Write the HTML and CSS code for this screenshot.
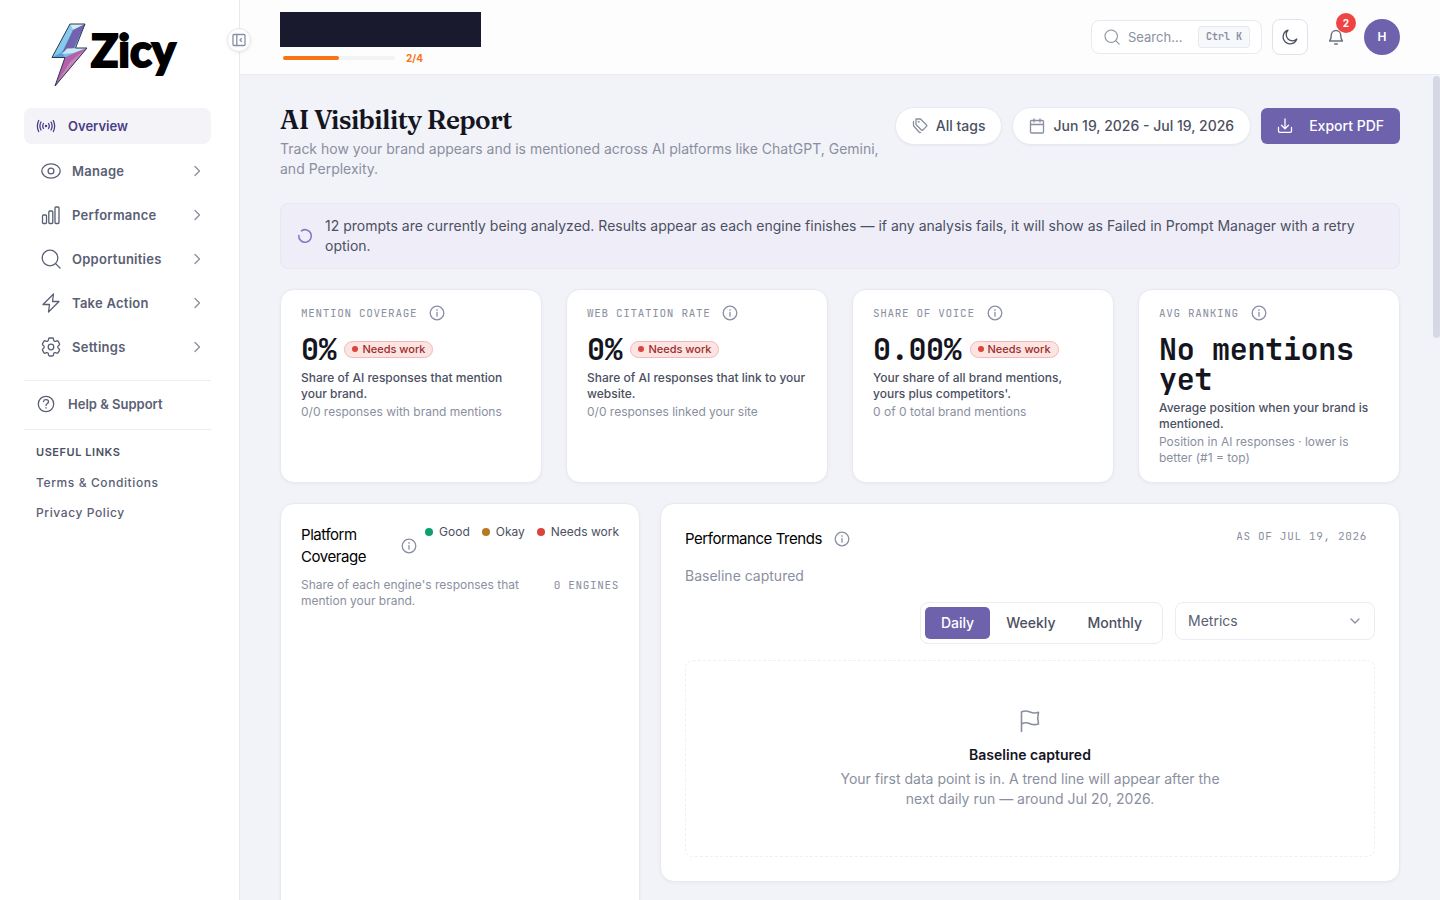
FILE: index.html
```html
<!DOCTYPE html>
<html lang="en">
<head>
    <meta charset="UTF-8">
    <meta name="viewport" content="width=device-width, initial-scale=1.0">
    <title>AI Visibility Report - Zicy</title>
    <link rel="stylesheet" href="styles.css">
</head>
<body>
    <!-- Shared icons -->
    <svg class="sprite" aria-hidden="true">
        <symbol id="chevron" viewBox="0 0 16 16"><path d="M6 3.500 10.500 8 6 12.500"/></symbol>
        <symbol id="info" viewBox="0 0 16 16"><circle cx="8" cy="8" r="6.800"/><path d="M8 7.400v3.800M8 4.700v.6"/></symbol>
        <symbol id="search" viewBox="0 0 20 20"><circle cx="9" cy="9" r="7.800"/><path d="m14.600 14.600 4.400 4.400"/></symbol>
    </svg>

    <div class="app">
        <aside class="sidebar">
            <a class="logo" href="#">
                <svg class="logo-bolt" width="37" height="64" viewBox="0 0 37 64">
                    <path fill="#72bfe8" d="M19 1h15L24.500 25H36L4 63l10-28.500H1z"/>
                    <path fill="#d2edf6" d="m19 1 3 6L34 1z"/>
                    <path fill="#86caec" d="m19 1 3 6-10 20L1 34.500z"/>
                    <path fill="#7263b0" d="M34 1 22 7 11 30l12-5z"/>
                    <path fill="#5a9fd9" d="m1 34.500 10-5 3 5z"/>
                    <path fill="#c8eaf5" d="M16 25.500 36 25l-13 5-12 1z"/>
                    <path fill="#b361a8" d="m14 34.500 9-4.500L36 25 4 63z"/>
                    <path fill="#c884bf" d="M36 25 4 63l15-24z"/>
                    <path fill="none" stroke="#30384f" stroke-width="1" d="M19 1h15L24.500 25H36L4 63l10-28.500H1z"/>
                </svg>
                <span class="logo-text">Zicy</span>
            </a>

            <nav>
                <a class="nav-item active" href="#">
                    <svg class="icon" width="20" height="20" viewBox="0 0 20 20"><circle cx="10" cy="10" r=".6"/><path d="M7.500 7.500q-1.600 2.500 0 5M12.500 7.500q1.600 2.500 0 5M5 6q-2.200 4 0 8M15 6q2.200 4 0 8M2.700 4.500q-2.700 5.500 0 11M17.300 4.500q2.700 5.500 0 11"/></svg>
                    Overview
                </a>
                <a class="nav-item nav-group" href="#">
                    <svg class="icon" width="20" height="20" viewBox="0 0 20 20"><ellipse cx="10" cy="10" rx="9.200" ry="7.200"/><circle cx="10" cy="10" r="2.900"/></svg>
                    Manage
                    <svg class="icon chevron" width="16" height="16"><use href="#chevron"/></svg>
                </a>
                <a class="nav-item nav-group" href="#">
                    <svg class="icon" width="20" height="20" viewBox="0 0 20 20"><rect x="1.500" y="10" width="4" height="8.500" rx="1"/><rect x="7.800" y="6" width="4" height="12.500" rx="1"/><rect x="14" y="2" width="4" height="16.500" rx="1"/></svg>
                    Performance
                    <svg class="icon chevron" width="16" height="16"><use href="#chevron"/></svg>
                </a>
                <a class="nav-item nav-group" href="#">
                    <svg class="icon" width="20" height="20"><use href="#search"/></svg>
                    Opportunities
                    <svg class="icon chevron" width="16" height="16"><use href="#chevron"/></svg>
                </a>
                <a class="nav-item nav-group" href="#">
                    <svg class="icon" width="20" height="20" viewBox="0 0 20 20"><path d="M12.500 1 2 11.500h6.500L7.500 19 18 8.500h-6.500z"/></svg>
                    Take Action
                    <svg class="icon chevron" width="16" height="16"><use href="#chevron"/></svg>
                </a>
                <a class="nav-item nav-group" href="#">
                    <svg class="icon" width="20" height="20" viewBox="2 2 20 20"><path d="M9.594 3.940c.090-.542.560-.940 1.110-.940h2.593c.550 0 1.020.398 1.110.940l.213 1.281c.063.374.313.686.645.870.074.040.147.083.220.127.325.196.720.257 1.075.124l1.217-.456a1.125 1.125 0 0 1 1.370.490l1.296 2.247a1.125 1.125 0 0 1-.260 1.431l-1.003.827c-.293.241-.438.613-.430.992a7.723 7.723 0 0 1 0 .255c-.008.378.137.750.430.991l1.004.827c.424.350.534.955.260 1.430l-1.298 2.247a1.125 1.125 0 0 1-1.369.491l-1.217-.456c-.355-.133-.750-.072-1.076.124a6.470 6.470 0 0 1-.220.128c-.331.183-.581.495-.644.869l-.213 1.281c-.090.543-.560.940-1.110.940h-2.594c-.550 0-1.019-.398-1.110-.940l-.213-1.281c-.062-.374-.312-.686-.644-.870a6.520 6.520 0 0 1-.220-.127c-.325-.196-.720-.257-1.076-.124l-1.217.456a1.125 1.125 0 0 1-1.369-.490l-1.297-2.247a1.125 1.125 0 0 1 .260-1.431l1.004-.827c.292-.240.437-.613.430-.991a6.932 6.932 0 0 1 0-.255c.007-.380-.138-.751-.430-.992l-1.004-.827a1.125 1.125 0 0 1-.260-1.430l1.297-2.247a1.125 1.125 0 0 1 1.370-.491l1.216.456c.356.133.751.072 1.076-.124.072-.044.146-.086.220-.128.332-.183.582-.495.644-.869z"/><circle cx="12" cy="12" r="2.800"/></svg>
                    Settings
                    <svg class="icon chevron" width="16" height="16"><use href="#chevron"/></svg>
                </a>
            </nav>

            <div class="help">
                <a class="nav-item" href="#">
                    <svg class="icon" width="20" height="20" viewBox="0 0 20 20"><circle cx="10" cy="10" r="7.700"/><path d="M7.500 7.500c.5-2.800 5.500-2.400 5 .5-.3 1.500-2.500 1.700-2.500 3.500M10 13.700v.4"/></svg>
                    Help &amp; Support
                </a>
            </div>

            <div class="useful">
                <h2>USEFUL LINKS</h2>
                <a href="#">Terms &amp; Conditions</a>
                <a href="#">Privacy Policy</a>
            </div>

            <button class="collapse-btn" aria-label="Collapse sidebar">
                <svg class="icon" width="14" height="14" viewBox="0 0 14 14"><rect x="1" y="1.500" width="12" height="11" rx="1"/><path d="M4.800 1.500v11M9.500 5.500 8 7l1.500 1.500"/></svg>
            </button>
        </aside>

        <div class="content">
            <header class="topbar">
                <div class="workspace">
                    <div class="workspace-name"></div>
                    <div class="setup">
                        <div class="setup-track"><div class="setup-fill" style="width: 50%"></div></div>
                        <span>2/4</span>
                    </div>
                </div>
                <div class="tools">
                    <label class="search">
                        <svg class="icon" width="16" height="16"><use href="#search"/></svg>
                        <input type="text" placeholder="Search..." aria-label="Search">
                        <kbd>Ctrl K</kbd>
                    </label>
                    <button class="theme-btn" aria-label="Dark mode">
                        <svg class="icon" width="18" height="18" viewBox="0 0 18 18"><path d="M7 2.200A7 7 0 1 0 15.800 11 6 6 0 0 1 7 2.200z"/></svg>
                    </button>
                    <button class="bell-btn" aria-label="Notifications">
                        <svg class="icon" width="18" height="18" viewBox="0 0 16 16"><path d="M2.300 11.500c1.200-1.300 1.500-2.500 1.500-5a4.200 4.200 0 0 1 8.400 0c0 2.500.300 3.700 1.500 5zM6.800 14.300h2.400"/></svg>
                        <span class="bell-count">2</span>
                    </button>
                    <button class="avatar">H</button>
                </div>
            </header>

            <div class="scroll-area">
                <main>
                    <div class="page-head">
                        <div class="page-title">
                            <h1>AI Visibility Report</h1>
                            <p>Track how your brand appears and is mentioned across AI platforms like ChatGPT, Gemini, and Perplexity.</p>
                        </div>
                        <div class="actions">
                            <button class="pill">
                                <svg class="icon" width="16" height="16" viewBox="0 0 16 16"><path d="M4 1h4.500l6 6q.7.7 0 1.400L10.800 12q-.7.700-1.400 0L4 6.500zM1.500 3.500v4.300l5.500 6.200q.7.800 1.700.500"/><circle cx="6.700" cy="3.700" r=".4"/></svg>
                                All tags
                            </button>
                            <button class="pill">
                                <svg class="icon" width="16" height="16" viewBox="0 0 16 16"><rect x="1.500" y="2.500" width="13" height="12.500" rx="1"/><path d="M1.500 6.500h13M5 .8V4M11 .8V4"/></svg>
                                Jun 19, 2026 - Jul 19, 2026
                            </button>
                            <button class="export-btn">
                                <svg class="icon" width="16" height="16" viewBox="0 0 16 16"><path d="M8 1v9.500M4.500 7.200 8 10.700l3.500-3.500M1.500 9.500V13q0 1.300 1.300 1.300h10.400q1.300 0 1.300-1.300V9.500"/></svg>
                                Export PDF
                            </button>
                        </div>
                    </div>

                    <div class="notice">
                        <svg class="icon" width="16" height="16" viewBox="0 0 16 16"><path d="M4.500 2.800A6.300 6.300 0 1 1 1.800 7.500"/></svg>
                        <p>12 prompts are currently being analyzed. Results appear as each engine finishes — if any analysis fails, it will show as Failed in Prompt Manager with a retry option.</p>
                    </div>

                    <section class="stats">
                        <article class="card stat">
                            <div class="stat-label">MENTION COVERAGE <svg class="icon" width="16" height="16"><use href="#info"/></svg></div>
                            <div class="stat-value">0% <span class="badge">Needs work</span></div>
                            <p>Share of AI responses that mention your brand.</p>
                            <small>0/0 responses with brand mentions</small>
                        </article>
                        <article class="card stat">
                            <div class="stat-label">WEB CITATION RATE <svg class="icon" width="16" height="16"><use href="#info"/></svg></div>
                            <div class="stat-value">0% <span class="badge">Needs work</span></div>
                            <p>Share of AI responses that link to your website.</p>
                            <small>0/0 responses linked your site</small>
                        </article>
                        <article class="card stat">
                            <div class="stat-label">SHARE OF VOICE <svg class="icon" width="16" height="16"><use href="#info"/></svg></div>
                            <div class="stat-value">0.00% <span class="badge">Needs work</span></div>
                            <p>Your share of all brand mentions, yours plus competitors'.</p>
                            <small>0 of 0 total brand mentions</small>
                        </article>
                        <article class="card stat">
                            <div class="stat-label">AVG RANKING <svg class="icon" width="16" height="16"><use href="#info"/></svg></div>
                            <div class="stat-value">No mentions yet</div>
                            <p>Average position when your brand is mentioned.</p>
                            <small>Position in AI responses · lower is better (#1 = top)</small>
                        </article>
                    </section>

                    <section class="panels">
                        <article class="card platform">
                            <div class="platform-head">
                                <div class="panel-title">
                                    <h2>Platform Coverage</h2>
                                    <svg class="icon" width="16" height="16"><use href="#info"/></svg>
                                </div>
                                <ul class="legend">
                                    <li class="good">Good</li>
                                    <li class="okay">Okay</li>
                                    <li class="bad">Needs work</li>
                                </ul>
                            </div>
                            <div class="platform-sub">
                                <p>Share of each engine's responses that mention your brand.</p>
                                <span class="mono-label">0 ENGINES</span>
                            </div>
                        </article>

                        <article class="card trends">
                            <div class="trends-head">
                                <div class="panel-title">
                                    <h2>Performance Trends</h2>
                                    <svg class="icon" width="16" height="16"><use href="#info"/></svg>
                                </div>
                                <span class="mono-label">AS OF JUL 19, 2026</span>
                            </div>
                            <p class="trends-sub">Baseline captured</p>
                            <div class="controls">
                                <div class="segmented">
                                    <button class="selected">Daily</button>
                                    <button>Weekly</button>
                                    <button>Monthly</button>
                                </div>
                                <div class="select">
                                    <select aria-label="Metrics"><option>Metrics</option></select>
                                    <svg class="icon" width="16" height="16" viewBox="0 0 16 16"><path d="m4 6 4 4 4-4"/></svg>
                                </div>
                            </div>
                            <div class="empty">
                                <svg class="icon" width="24" height="24" viewBox="0 0 24 24"><path d="M3.500 22.500V3c3-1.800 5.500-1.300 8.500 0s5.500 1.300 8.500.300l-.8 5.700.8 6c-3 1-5.500 1-8.500-.300s-5.500-1.300-8.500.300"/></svg>
                                <h3>Baseline captured</h3>
                                <p>Your first data point is in. A trend line will appear after the next daily run — around Jul 20, 2026.</p>
                            </div>
                        </article>
                    </section>
                </main>
            </div>
            <div class="scroll-thumb"></div>
        </div>
    </div>
</body>
</html>
```
FILE: styles.css
```css
* {
    box-sizing: border-box;
}
body {
    margin: 0;
    font-family: Inter, sans-serif;
    font-size: 14px;
    line-height: 20px;
    color: #4b5062;
    background: #f2f3f8;
}
h1, h2, h3, p, ul {
    margin: 0;
    padding: 0;
}
a {
    color: inherit;
    text-decoration: none;
}
button, input, select {
    font: inherit;
    color: inherit;
}
button {
    cursor: pointer;
}
.sprite {
    display: none;
}
.icon {
    flex: none;
    fill: none;
    stroke: currentColor;
    stroke-width: 1.3;
    stroke-linecap: round;
    stroke-linejoin: round;
}
.app {
    display: flex;
    height: 100vh;
}

/* Sidebar */
.sidebar {
    position: relative;
    z-index: 1;
    flex: none;
    width: 240px;
    padding: 20px 28px 20px 24px;
    background: #fff;
    border-right: 1px solid #e9eaf1;
}
.logo {
    display: flex;
    align-items: center;
    gap: 3px;
    height: 70px;
    padding-left: 27px;
    margin-bottom: 18px;
}
.logo-text {
    padding-bottom: 10px;
    font-family: Lato, sans-serif;
    font-size: 45px;
    font-weight: 900;
    line-height: 60px;
    color: #000;
    -webkit-text-stroke: 2px #000;
}
.nav-item {
    display: flex;
    align-items: center;
    gap: 12px;
    height: 36px;
    padding: 0 12px;
    border-radius: 8px;
    font-size: 13px;
    font-weight: 600;
    color: #5a6074;
}
.nav-item.active {
    margin-bottom: 5px;
    color: #4a3f85;
    background: #f3f3f8;
}
.nav-item.nav-group {
    height: 44px;
    gap: 11px;
    padding: 0 6px 0 17px;
    letter-spacing: 0.02em;
}
.nav-item .chevron {
    margin-left: auto;
    color: #8a8fa0;
}
.help {
    margin-top: 11px;
    padding: 5px 0 7px;
    border-top: 1px solid #ededf0;
    border-bottom: 1px solid #ededf0;
}
.useful {
    padding: 12px;
}
.useful h2 {
    margin-bottom: 6px;
    font-size: 11px;
    font-weight: 600;
    letter-spacing: 0.05em;
}
.useful a {
    display: block;
    font-size: 12px;
    font-weight: 500;
    line-height: 30px;
    letter-spacing: 0.05em;
    color: #5a6074;
}
.collapse-btn {
    position: absolute;
    top: 28px;
    right: -12px;
    display: grid;
    place-items: center;
    width: 24px;
    height: 24px;
    padding: 0;
    border: 1px solid #e6e7f0;
    border-radius: 50%;
    background: #fff;
    color: #8a8fa5;
    box-shadow: 0 1px 3px rgba(80, 80, 120, 0.1);
}

/* Top bar */
.content {
    position: relative;
    flex: 1;
    min-width: 0;
    display: flex;
    flex-direction: column;
}
.topbar {
    display: flex;
    justify-content: space-between;
    align-items: center;
    flex: none;
    height: 75px;
    padding: 0 40px;
    background: #fdfdfd;
    border-bottom: 1px solid #ecedf2;
}
.workspace {
    padding-top: 4px;
}
.workspace-name {
    width: 201px;
    height: 35px;
    background: #1a1a2e;
}
.setup {
    display: flex;
    align-items: center;
    gap: 11px;
    padding: 3px 3px 0;
    font-size: 10px;
    font-weight: 700;
    line-height: 16px;
    color: #f97316;
}
.setup-track {
    width: 112px;
    height: 4px;
    border-radius: 2px;
    background: #f3f3f3;
}
.setup-fill {
    height: 4px;
    border-radius: 2px;
    background: #f97316;
}
.tools {
    display: flex;
    align-items: center;
    gap: 10px;
}
.search {
    display: flex;
    align-items: center;
    gap: 8px;
    width: 171px;
    height: 34px;
    padding: 0 11px 0 12px;
    border: 1px solid #e9eaf1;
    border-radius: 8px;
    background: #fff;
    color: #8a8fa0;
}
.search input {
    flex: 1;
    min-width: 0;
    padding: 0;
    border: none;
    outline: none;
    background: none;
    font-size: 13px;
}
.search input::placeholder {
    color: #8a8fa0;
}
.search kbd {
    padding: 0 7px;
    border: 1px solid #e6e8f0;
    border-radius: 4px;
    background: #f7f8fb;
    font-family: "JetBrains Mono", "Liberation Mono", monospace;
    font-size: 10px;
    font-weight: 600;
    line-height: 20px;
}
.theme-btn {
    display: grid;
    place-items: center;
    width: 36px;
    height: 36px;
    padding: 0;
    border: 1px solid #e0e1ec;
    border-radius: 8px;
    background: #fff;
}
.bell-btn {
    position: relative;
    display: grid;
    place-items: center;
    width: 36px;
    height: 36px;
    padding: 0;
    border: none;
    background: none;
    color: #6a7080;
}
.bell-count {
    position: absolute;
    top: -6px;
    right: -2px;
    width: 20px;
    border-radius: 10px;
    background: #ef4444;
    color: #fff;
    font-size: 10px;
    font-weight: 700;
}
.avatar {
    width: 36px;
    height: 36px;
    padding: 0;
    border: none;
    border-radius: 50%;
    background: #6f62ad;
    color: #fff;
    font-size: 12px;
    font-weight: 600;
}

/* Page */
.scroll-area {
    flex: 1;
    overflow-y: auto;
    scrollbar-width: none;
}
.scroll-thumb {
    position: absolute;
    top: 76px;
    right: 0;
    width: 7px;
    height: 262px;
    border-radius: 4px;
    background: #d6d9e5;
}
main {
    padding: 28px 40px;
}
.page-head {
    display: flex;
    align-items: flex-start;
    justify-content: space-between;
    gap: 14px;
}
.page-title h1 {
    margin-bottom: 2px;
    font-family: Fraunces, "Liberation Serif", serif;
    font-size: 26px;
    font-weight: 600;
    line-height: 34px;
    letter-spacing: -0.02em;
    color: #14151f;
}
.page-title p {
    color: #8a8fa0;
}
.actions {
    display: flex;
    align-items: center;
    flex: none;
    gap: 10px;
    padding-top: 4px;
}
.pill, .export-btn {
    display: flex;
    align-items: center;
    font-weight: 500;
}
.pill {
    gap: 8px;
    height: 38px;
    padding: 0 16px;
    border: 1px solid #e9eaf1;
    border-radius: 19px;
    background: #fff;
    box-shadow: 0 1px 2px rgba(80, 80, 120, 0.06);
}
.pill .icon {
    color: #8a8fa0;
}
.export-btn {
    gap: 16px;
    height: 36px;
    padding: 0 16px;
    border: none;
    border-radius: 6px;
    background: #6f62ad;
    color: #fff;
}
.notice {
    display: flex;
    align-items: center;
    gap: 12px;
    margin: 24px 0 20px;
    padding: 12px 16px;
    border: 1px solid #e9e8f1;
    border-radius: 8px;
    background: #efedf8;
}
.notice .icon {
    stroke-width: 1.6;
    color: #8579c4;
}
.card {
    border: 1px solid #e9eaf1;
    border-radius: 14px;
    background: #fff;
    box-shadow: 0 1px 3px rgba(80, 80, 120, 0.06);
}
.stats {
    display: grid;
    grid-template-columns: repeat(4, 1fr);
    gap: 24px;
    margin-bottom: 20px;
}
.stat {
    padding: 15px 20px 16px;
    font-size: 12px;
    line-height: 16px;
}
.stat-label, .mono-label {
    font-family: "JetBrains Mono", "Liberation Mono", monospace;
    font-size: 11px;
    letter-spacing: 0.06em;
    line-height: 16px;
    color: #8a8fa0;
}
.stat-label {
    display: flex;
    gap: 12px;
}
.stat-value {
    display: flex;
    align-items: center;
    gap: 8px;
    margin: 13px 0 6px;
    font-family: "JetBrains Mono", "Liberation Mono", monospace;
    font-size: 30px;
    font-weight: 700;
    line-height: 30px;
    letter-spacing: -0.01em;
    color: #14151f;
}
.badge {
    display: flex;
    align-items: center;
    gap: 4px;
    padding: 0 7px;
    border: 1px solid #f3b9b6;
    border-radius: 9px;
    background: #fbe4e2;
    color: #9b2c2c;
    font-family: Inter, sans-serif;
    font-size: 11px;
    font-weight: 500;
    line-height: 15px;
    letter-spacing: normal;
}
.badge::before {
    content: "";
    width: 6px;
    height: 6px;
    border-radius: 50%;
    background: #d9453d;
}
.stat p {
    margin-bottom: 2px;
    font-weight: 500;
}
.stat small {
    display: block;
    font-size: 12px;
    color: #8a8fa0;
}
.stat-label .icon, .panel-title .icon {
    color: #8a8fa5;
}

/* Panels */
.panels {
    display: grid;
    grid-template-columns: 360px 1fr;
    align-items: start;
    gap: 20px;
}
.panel-title {
    display: flex;
    align-items: center;
    gap: 12px;
}
.panel-title h2 {
    font-size: 15px;
    font-weight: 400;
    line-height: 22px;
    letter-spacing: -0.03em;
    color: #000;
}
.platform {
    min-height: 560px;
    padding: 20px;
    font-size: 12px;
    line-height: 16px;
}
.platform-head, .platform-sub, .trends-head {
    display: flex;
    align-items: flex-start;
    justify-content: space-between;
}
.platform-head {
    gap: 8px;
    margin-bottom: 9px;
}
.legend {
    display: flex;
    flex: none;
    gap: 12px;
    list-style: none;
}
.legend li {
    display: flex;
    align-items: center;
    gap: 6px;
}
.legend li::before {
    content: "";
    width: 8px;
    height: 8px;
    border-radius: 50%;
}
.legend .good::before {
    background: #0f9f6e;
}
.legend .okay::before {
    background: #b7791f;
}
.legend .bad::before {
    background: #d9453d;
}
.platform-sub {
    gap: 24px;
    color: #8a8fa0;
}
.platform-sub .mono-label {
    flex: none;
}
.trends {
    padding: 24px;
}
.trends-head {
    padding-right: 8px;
}
.trends-sub {
    margin: 16px 0;
    color: #8a8fa0;
}
.controls {
    display: flex;
    align-items: flex-start;
    justify-content: flex-end;
    gap: 12px;
    margin-bottom: 16px;
}
.segmented {
    display: flex;
    padding: 4px;
    border: 1px solid #ebecf2;
    border-radius: 8px;
}
.segmented button {
    height: 32px;
    padding: 0 16px;
    border: none;
    border-radius: 5px;
    background: none;
    font-weight: 500;
}
.segmented .selected {
    background: #6f62ad;
    color: #fff;
}
.select {
    position: relative;
    width: 200px;
    color: #5a6074;
}
.select select {
    appearance: none;
    width: 100%;
    height: 38px;
    padding: 0 12px;
    border: 1px solid #ebecf2;
    border-radius: 8px;
    background: #fff;
}
.select .icon {
    position: absolute;
    top: 11px;
    right: 12px;
    color: #8a8fa0;
    pointer-events: none;
}
.empty {
    display: flex;
    flex-direction: column;
    align-items: center;
    padding: 48px 20px 47px;
    border: 1px dashed #f0f0f4;
    border-radius: 8px;
    text-align: center;
    color: #8a8fa0;
}
.empty .icon {
    stroke-width: 1.6;
}
.empty h3 {
    margin: 12px 0 4px;
    font-size: 14px;
    font-weight: 600;
    color: #14151f;
}
.empty p {
    max-width: 400px;
}
```
